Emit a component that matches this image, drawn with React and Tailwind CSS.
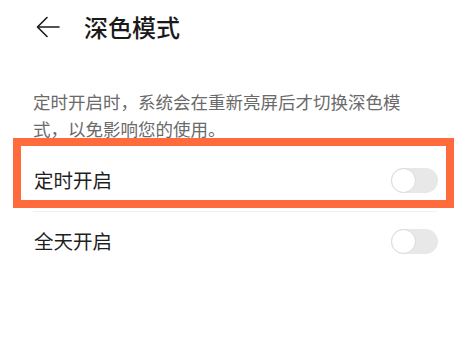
import React from 'react';

const Toggle = () => (
  <div className="relative w-[47px] h-[25px] rounded-full bg-[#e8e8e8]">
    <div className="absolute left-0 top-0 w-[25px] h-[25px] rounded-full bg-white border border-[#dadada]" />
  </div>
);

export default function App() {
  return (
    <div
      className="w-[457px] h-[356px] bg-white overflow-hidden"
      style={{ fontFamily: '"Noto Sans CJK SC", "Noto Sans", sans-serif' }}
    >
      {/* header */}
      <div className="h-[54px] flex items-center pl-[36px]">
        <svg width="24" height="22" viewBox="0 0 24 22" fill="none" stroke="#1a1a1a" strokeWidth="1.6" strokeLinecap="round" strokeLinejoin="round">
          <path d="M23 11H2" />
          <path d="M11 1.5L1.5 11L11 20.5" />
        </svg>
        <span className="ml-[24px] text-[24px] leading-none font-medium text-[#1a1a1a]">深色模式</span>
      </div>

      {/* description */}
      <div className="mt-[34px] h-[50px] px-[33px] text-[17.5px] leading-[27px] text-[#6a6a6a]">
        定时开启时，系统会在重新亮屏后才切换深色模式，以免影响您的使用。
      </div>

      {/* highlighted row */}
      <div className="ml-[13px] w-[441px] h-[70px] border-[8px] border-[#ff6b3c] pt-[14px] pl-[13px] pr-[8px] flex items-center justify-between">
        <span className="text-[19.5px] leading-none text-[#1f1f1f]">定时开启</span>
        <Toggle />
      </div>

      <div className="mt-[3px] ml-[33px] w-[404px] h-px bg-[#f1f1f1]" />

      <div className="h-[58px] pl-[34px] pr-[19px] flex items-center justify-between">
        <span className="text-[19.5px] leading-none text-[#1f1f1f]">全天开启</span>
        <Toggle />
      </div>
    </div>
  );
}
